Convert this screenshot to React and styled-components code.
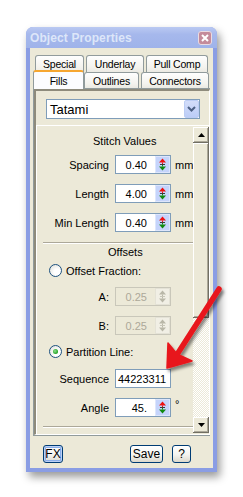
import React from 'react'
import styled, { createGlobalStyle, css } from 'styled-components'

const GlobalStyle = createGlobalStyle`
  html, body { margin: 0; padding: 0; background: #fff; }
  body {
    font-family: "Liberation Sans", Arial, sans-serif;
    font-size: 11px;
    color: #000;
  }
`

const Page = styled.div`
  position: relative;
  width: 243px;
  height: 497px;
  box-sizing: border-box;
  padding: 27px 0 0 26px;
`

const Window = styled.div`
  width: 191px;
  height: 445px;
  display: flex;
  flex-direction: column;
  background: #8a9de4;
  border-radius: 7px 7px 0 0;
  box-shadow: 3px 5px 9px rgba(0, 0, 0, 0.4);
`

const TitleBar = styled.div`
  height: 21px;
  flex: none;
  display: flex;
  align-items: center;
  justify-content: space-between;
  padding: 0 5px 0 4px;
  border-radius: 7px 7px 0 0;
  background: linear-gradient(#bac9f2, #a6b8ec 35%, #9fb3ea);
`

const Title = styled.span`
  font-weight: bold;
  font-size: 12px;
  color: #dde6f9;
  letter-spacing: 0.1px;
`

const CloseBox = styled.div`
  width: 12px;
  height: 12px;
  display: flex;
  align-items: center;
  justify-content: center;
  border: 1px solid #eadbe2;
  border-radius: 3px;
  background: #c48b9b;
`

const Body = styled.div`
  flex: 1;
  margin: 0 4px 4px;
  background: #ece9d8;
  padding: 7px 3px 0;
  display: flex;
  flex-direction: column;
`

const TabRow = styled.div`
  display: flex;
  align-items: flex-end;
  height: ${p => p.$h}px;
  padding-left: ${p => p.$pad || 0}px;
`

const Tab = styled.div`
  width: ${p => p.$w}px;
  margin-right: ${p => p.$gap || 0}px;
  height: 100%;
  box-sizing: border-box;
  display: flex;
  align-items: flex-start;
  justify-content: center;
  padding-top: 2px;
  font-size: 10.5px;
  letter-spacing: -0.2px;
  border: 1px solid #919b9c;
  border-bottom: none;
  border-radius: 3px 3px 0 0;
  background: linear-gradient(#fefefe, #f4f3ee 70%, #ebeae3);
  ${p => p.$active && css`
    position: relative;
    z-index: 2;
    height: 19px;
    margin-bottom: -1px;
    padding-top: 3px;
    border-top: 2px solid #f6a630;
    background: #fcfcfe;
  `}
`

const TabPanel = styled.div`
  height: 348px;
  box-sizing: border-box;
  border: 1px solid #919b9c;
  background: #ece9d8;
  display: flex;
`

const Frame = styled.div`
  flex: 1;
  display: flex;
  flex-direction: column;
  border-style: solid;
  border-width: 2px 1px 1px 2px;
  border-color: #8e8b7c #fff #fff #8e8b7c;
`

const TopBox = styled.div`
  height: 34px;
  box-sizing: border-box;
  padding: 8px 0 0 10px;
`

const Combo = styled.div`
  width: 154px;
  height: 20px;
  box-sizing: border-box;
  border: 1px solid #7f9db9;
  background: #fff;
  display: flex;
  align-items: center;
  justify-content: space-between;
  padding: 0 0 0 3px;
  font-size: 13px;
`

const ComboButton = styled.div`
  width: 15px;
  height: 18px;
  box-sizing: border-box;
  border: 1px solid #bccdf4;
  border-radius: 2px;
  background: linear-gradient(#d3ddf9, #bccdf7);
  display: flex;
  align-items: center;
  justify-content: center;
`

const ScrollPane = styled.div`
  flex: 1;
  display: flex;
  border-top: 1px solid #fff;
  border-left: 1px solid #fff;
`

const Content = styled.div`
  flex: 1;
  display: flex;
  flex-direction: column;
  padding-top: 9px;
`

const Heading = styled.div`
  line-height: 13px;
  margin-top: ${p => p.$top || 0}px;
  margin-left: ${p => p.$indent}px;
`

const FieldRow = styled.div`
  display: grid;
  grid-template-columns: 72px 56px auto;
  column-gap: 6px;
  align-items: center;
  height: 19px;
  margin-top: ${p => p.$top}px;
`

const Label = styled.span`
  text-align: right;
`

const Unit = styled.span`
  margin-left: -2px;
  align-self: ${p => (p.$sup ? 'start' : 'center')};
`

const Input = styled.div`
  height: 19px;
  box-sizing: border-box;
  border: 1px solid ${p => (p.$disabled ? '#c9c7ba' : '#7f9db9')};
  background: ${p => (p.$disabled ? '#ece9d8' : '#fff')};
  color: ${p => (p.$disabled ? '#aca899' : '#000')};
  display: flex;
  align-items: center;
  justify-content: ${p => (p.$left ? 'flex-start' : 'flex-end')};
  padding-left: 2px;
  font-size: 11px;
`

const Value = styled.span`
  padding-right: 8px;
`

const Spin = styled.div`
  width: 15px;
  height: 17px;
  box-sizing: border-box;
  border: 1px solid ${p => (p.$disabled ? '#e4e2d6' : '#dde6fc')};
  background: ${p => (p.$disabled ? '#f1efe5' : '#c5d4fb')};
  display: flex;
`

const Separator = styled.div`
  height: 0;
  margin: ${p => p.$top}px 0 0 6px;
  border-top: 1px solid #aca899;
  border-bottom: 1px solid #fff;
`

const RadioRow = styled.label`
  display: flex;
  align-items: center;
  gap: 4px;
  height: 13px;
  margin: ${p => p.$top}px 0 0 12px;
`

const RadioCircle = styled.span`
  width: 13px;
  height: 13px;
  box-sizing: border-box;
  border-radius: 50%;
  border: 1px solid #1c5180;
  background: radial-gradient(circle at 65% 65%, #fff 30%, #dcdcd4);
  display: flex;
  align-items: center;
  justify-content: center;
  &::after {
    content: '';
    display: ${p => (p.$checked ? 'block' : 'none')};
    width: 5px;
    height: 5px;
    border-radius: 50%;
    background: radial-gradient(circle at 40% 40%, #8ee08e, #21a121 70%);
  }
`

const ScrollBar = styled.div`
  width: 16px;
  display: flex;
  flex-direction: column;
  padding: 1px 0;
`

const raised = css`
  background: #ece9d8;
  box-shadow: inset -1px -1px #716f64, inset 1px 1px #fff, inset -2px -2px #aca899;
`

const ScrollButton = styled.div`
  height: 16px;
  flex: none;
  display: flex;
  align-items: center;
  justify-content: center;
  ${raised}
`

const Thumb = styled.div`
  height: 175px;
  flex: none;
  ${raised}
`

const Track = styled.div`
  flex: 1;
  background-image: conic-gradient(#fff 25%, #ece9d8 0 50%, #fff 0 75%, #ece9d8 0);
  background-size: 2px 2px;
`

const Footer = styled.div`
  display: flex;
  align-items: center;
  margin-top: 9px;
  padding: 0 19px 0 10px;
  gap: 9px;
`

const Button = styled.div`
  width: ${p => p.$w}px;
  height: 18px;
  box-sizing: border-box;
  border: 1px solid #003c74;
  border-radius: 3px;
  background: linear-gradient(#fff, #f4f4f0 55%, #dcd8cc);
  display: flex;
  align-items: center;
  justify-content: center;
  font-size: 12px;
  margin-left: ${p => (p.$push ? 'auto' : '0')};
  ${p => p.$focus && css`
    box-shadow: inset 0 0 0 1px #bcd0f5, inset 0 0 0 2px #8aaeea;
  `}
`

const Overlay = styled.svg`
  position: absolute;
  left: 0;
  top: 0;
  pointer-events: none;
`

const SpinIcon = ({ disabled }) => {
  const up = disabled ? '#b9b7a8' : '#ee1111'
  const down = disabled ? '#b9b7a8' : '#108a10'
  const mid = disabled ? '#c8c6b8' : '#3a3a3a'
  return (
    <svg width="13" height="15" viewBox="0 0 13 15">
      <polygon points="6.5,1.5 3,5.5 10,5.5" fill={up} />
      <rect x="6" y="5.5" width="1" height="1.5" fill={up} />
      <rect x="4" y="7" width="5" height="1" fill={mid} />
      <rect x="6" y="8" width="1" height="1.5" fill={down} />
      <polygon points="3,9.5 10,9.5 6.5,13.5" fill={down} />
    </svg>
  )
}

const Field = ({ label, value, unit, top, disabled, spin = true, left, sup }) => (
  <FieldRow $top={top}>
    <Label>{label}</Label>
    <Input $disabled={disabled} $left={left}>
      {spin ? <Value>{value}</Value> : value}
      {spin && (
        <Spin $disabled={disabled}>
          <SpinIcon disabled={disabled} />
        </Spin>
      )}
    </Input>
    <Unit $sup={sup}>{unit}</Unit>
  </FieldRow>
)

export default function App() {
  return (
    <Page>
      <GlobalStyle />
      <Window>
        <TitleBar>
          <Title>Object Properties</Title>
          <CloseBox>
            <svg width="8" height="8" viewBox="0 0 8 8">
              <path d="M1 1 L7 7 M7 1 L1 7" stroke="#fff" strokeWidth="2" />
            </svg>
          </CloseBox>
        </TitleBar>
        <Body>
          <TabRow $h={17} $pad={2}>
            <Tab $w={49} $gap={2}>Special</Tab>
            <Tab $w={58} $gap={2}>Underlay</Tab>
            <Tab $w={62}>Pull Comp</Tab>
          </TabRow>
          <TabRow $h={16}>
            <Tab $w={51} $active>Fills</Tab>
            <Tab $w={55} $gap={2}>Outlines</Tab>
            <Tab $w={68}>Connectors</Tab>
          </TabRow>
          <TabPanel>
            <Frame>
              <TopBox>
                <Combo>
                  Tatami
                  <ComboButton>
                    <svg width="9" height="6" viewBox="0 0 9 6">
                      <polyline points="1,1 4.5,4.5 8,1" fill="none" stroke="#4d6185" strokeWidth="2" />
                    </svg>
                  </ComboButton>
                </Combo>
              </TopBox>
              <ScrollPane>
                <Content>
                  <Heading $indent={56}>Stitch Values</Heading>
                  <Field label="Spacing" value="0.40" unit="mm" top={7} />
                  <Field label="Length" value="4.00" unit="mm" top={10} />
                  <Field label="Min Length" value="0.40" unit="mm" top={10} />
                  <Separator $top={10} />
                  <Heading $indent={71} $top={2}>Offsets</Heading>
                  <RadioRow $top={5}>
                    <RadioCircle />
                    Offset Fraction:
                  </RadioRow>
                  <Field label="A:" value="0.25" top={10} disabled />
                  <Field label="B:" value="0.25" top={10} disabled />
                  <RadioRow $top={10}>
                    <RadioCircle $checked />
                    Partition Line:
                  </RadioRow>
                  <Field label="Sequence" value="44223311" top={11} spin={false} left />
                  <Field label="Angle" value="45." unit="°" top={10} sup />
                  <Separator $top={9} />
                </Content>
                <ScrollBar>
                  <ScrollButton>
                    <svg width="7" height="4" viewBox="0 0 7 4"><polygon points="3.5,0 7,4 0,4" fill="#000" /></svg>
                  </ScrollButton>
                  <Thumb />
                  <Track />
                  <ScrollButton>
                    <svg width="7" height="4" viewBox="0 0 7 4"><polygon points="0,0 7,0 3.5,4" fill="#000" /></svg>
                  </ScrollButton>
                </ScrollBar>
              </ScrollPane>
            </Frame>
          </TabPanel>
          <Footer>
            <Button $w={20} $focus>FX</Button>
            <Button $w={33} $push>Save</Button>
            <Button $w={19}>?</Button>
          </Footer>
        </Body>
      </Window>
      <Overlay width="243" height="497" viewBox="0 0 243 497">
        <defs>
          <filter id="arrowShadow" x="-20%" y="-20%" width="140%" height="140%">
            <feDropShadow dx="2" dy="3" stdDeviation="1.5" floodColor="#000" floodOpacity="0.45" />
          </filter>
        </defs>
        <g filter="url(#arrowShadow)" fill="#e8161b" stroke="#e8161b">
          <line x1="219" y1="289" x2="178" y2="353" strokeWidth="5.5" strokeLinecap="round" />
          <polygon points="167,368 168,343 177,354 192,361" strokeWidth="1.5" strokeLinejoin="round" />
        </g>
      </Overlay>
    </Page>
  )
}
